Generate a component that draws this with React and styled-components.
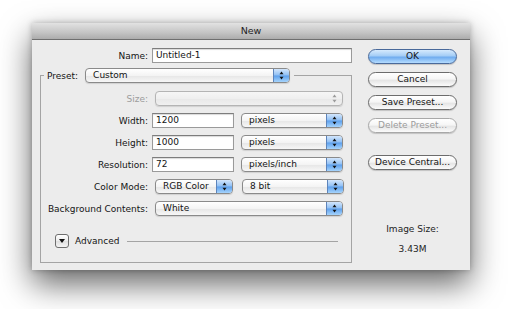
import React from "react";
import styled, { createGlobalStyle } from "styled-components";

const GlobalStyle = createGlobalStyle`
	html, body {
		margin: 0;
		padding: 0;
		background: #ffffff;
	}
	body {
		font-family: "DejaVu Sans", "Liberation Sans", sans-serif;
		font-size: 9px;
		color: #141414;
	}
`;

const Page = styled.div`
	width: 508px;
	height: 309px;
	overflow: hidden;
	background: #ffffff;
	padding: 23px 0 0 32px;
	box-sizing: border-box;
`;

const Window = styled.div`
	width: 438px;
	height: 247px;
	background: #ececec;
	display: flex;
	flex-direction: column;
	box-shadow: 0 14px 30px rgba(0, 0, 0, 0.6), 0 0 6px rgba(0, 0, 0, 0.25);
`;

const TitleBar = styled.div`
	height: 16px;
	line-height: 16px;
	text-align: center;
	font-size: 9.5px;
	color: #1e1e1e;
	background: linear-gradient(#e2e2e2, #c4c4c4 60%, #acacac);
	border-bottom: 1px solid #6f6f6f;
`;

const Body = styled.div`
	flex: 1;
	display: flex;
	justify-content: space-between;
`;

const LeftColumn = styled.div`
	padding: 8px 0 0 8px;
	display: flex;
	flex-direction: column;
`;

const NameRow = styled.div`
	display: flex;
	align-items: center;
	gap: 4px;
`;

const Label = styled.span`
	width: ${p => p.$width || 101}px;
	text-align: right;
	white-space: nowrap;
	color: ${p => (p.$disabled ? "#9c9c9c" : "#141414")};
`;

const TextInput = styled.div`
	width: ${p => p.$width}px;
	height: 15px;
	box-sizing: border-box;
	line-height: 13px;
	padding-left: 3px;
	background: #ffffff;
	border: 1px solid #9a9a9a;
	border-top-color: #7d7d7d;
	box-shadow: inset 0 1px 1px rgba(0, 0, 0, 0.15);
`;

const Group = styled.section`
	margin-top: 12px;
	padding: 0 0 13px 6px;
	width: 312px;
	height: 188px;
	box-sizing: border-box;
	border: 1px solid #a4a4a4;
	display: flex;
	flex-direction: column;
`;

const GroupHeader = styled.div`
	align-self: flex-start;
	display: flex;
	align-items: center;
	gap: 7px;
	margin: -8px 0 0 -3px;
	padding: 0 4px 0 3px;
	background: #ececec;
`;

const Rows = styled.div`
	margin-top: 8px;
	display: grid;
	grid-template-columns: 101px 1fr;
	column-gap: 4px;
	row-gap: 7px;
	align-items: center;
`;

const Controls = styled.div`
	display: flex;
	align-items: center;
	gap: 4px;
`;

const SelectBox = styled.div`
	width: ${p => p.$width}px;
	height: 15px;
	margin-left: ${p => p.$offset ?? 3}px;
	box-sizing: border-box;
	display: flex;
	border: 1px solid ${p => (p.$disabled ? "#b4b4b4" : "#8a8a8a")};
	border-radius: 4px;
	overflow: hidden;
	background: ${p =>
		p.$disabled
			? "linear-gradient(#f6f6f6, #efefef 50%, #e8e8e8 51%, #f0f0f0)"
			: "linear-gradient(#ffffff, #f4f4f4 50%, #e6e6e6 52%, #f7f7f7)"};
	box-shadow: 0 1px 1px rgba(0, 0, 0, 0.12);
`;

const SelectValue = styled.span`
	flex: 1;
	line-height: 13px;
	padding-left: 7px;
	white-space: nowrap;
`;

const Stepper = styled.span`
	width: 15px;
	display: flex;
	align-items: center;
	justify-content: center;
	background: ${p =>
		p.$disabled
			? "transparent"
			: "linear-gradient(#d3e6fc, #8fbff4 48%, #5c9fec 52%, #a6d4fc)"};
	border-left: 1px solid ${p => (p.$disabled ? "transparent" : "#5d84bb")};
`;

const Arrows = ({ color = "#111" }) => (
	<svg width="5" height="9" viewBox="0 0 5 9">
		<path d="M2.5 0.5 L4.5 3.3 L0.5 3.3 Z" fill={color} />
		<path d="M2.5 8.5 L4.5 5.7 L0.5 5.7 Z" fill={color} />
	</svg>
);

const Select = ({ value, width, disabled, offset }) => (
	<SelectBox $width={width} $disabled={disabled} $offset={offset}>
		<SelectValue>{value}</SelectValue>
		<Stepper $disabled={disabled}>
			<Arrows color={disabled ? "#9a9a9a" : "#111"} />
		</Stepper>
	</SelectBox>
);

const AdvancedRow = styled.div`
	margin-top: auto;
	display: flex;
	align-items: center;
	gap: 6px;
	padding: 0 13px 1px 8px;
`;

const DisclosureButton = styled.span`
	width: 14px;
	height: 14px;
	box-sizing: border-box;
	border: 1px solid #6e6e6e;
	border-radius: 3px;
	background: linear-gradient(#ffffff, #ececec 50%, #dedede 52%, #f4f4f4);
	display: flex;
	align-items: center;
	justify-content: center;
`;

const Rule = styled.span`
	flex: 1;
	height: 1px;
	background: #a4a4a4;
	margin-left: 2px;
`;

const RightColumn = styled.div`
	width: 89px;
	padding: 9px 13px 0 0;
	display: flex;
	flex-direction: column;
	align-items: center;
`;

const Button = styled.div`
	width: 89px;
	height: 15px;
	box-sizing: border-box;
	margin-bottom: ${p => p.$spaceAfter ?? 8}px;
	border-radius: 8px;
	text-align: center;
	line-height: 13px;
	white-space: nowrap;
	color: ${p => (p.$disabled ? "#9c9c9c" : "#141414")};
	border: 1px solid
		${p => (p.$primary ? "#49699a" : p.$disabled ? "#a8a8a8" : "#6c6c6c")};
	background: ${p =>
		p.$primary
			? "linear-gradient(#d6eafd, #a4cdf6 45%, #70acef 55%, #b4dcff)"
			: "linear-gradient(#ffffff, #f5f5f5 48%, #e4e4e4 54%, #fbfbfb)"};
	box-shadow: 0 1px 1px rgba(0, 0, 0, 0.18);
`;

const ImageSize = styled.div`
	margin-top: 41px;
	text-align: center;
	line-height: 20px;
	color: #1e1e1e;
`;

export default function App() {
	return (
		<>
			<GlobalStyle />
			<Page>
				<Window>
					<TitleBar>New</TitleBar>
					<Body>
						<LeftColumn>
							<NameRow>
								<Label $width={108}>Name:</Label>
								<TextInput $width={200}>Untitled-1</TextInput>
							</NameRow>
							<Group>
								<GroupHeader>
									<span>Preset:</span>
									<Select value="Custom" width={205} offset={0} />
								</GroupHeader>
								<Rows>
									<Label $disabled>Size:</Label>
									<Select value="" width={188} disabled />

									<Label>Width:</Label>
									<Controls>
										<TextInput $width={82}>1200</TextInput>
										<Select value="pixels" width={102} />
									</Controls>

									<Label>Height:</Label>
									<Controls>
										<TextInput $width={82}>1000</TextInput>
										<Select value="pixels" width={102} />
									</Controls>

									<Label>Resolution:</Label>
									<Controls>
										<TextInput $width={82}>72</TextInput>
										<Select value="pixels/inch" width={102} />
									</Controls>

									<Label>Color Mode:</Label>
									<Controls>
										<Select value="RGB Color" width={78} />
										<Select value="8 bit" width={102} offset={5} />
									</Controls>

									<Label>Background Contents:</Label>
									<Select value="White" width={188} />
								</Rows>
								<AdvancedRow>
									<DisclosureButton>
										<svg width="6" height="4" viewBox="0 0 6 4">
											<path d="M0 0 L6 0 L3 4 Z" fill="#111" />
										</svg>
									</DisclosureButton>
									<span>Advanced</span>
									<Rule />
								</AdvancedRow>
							</Group>
						</LeftColumn>
						<RightColumn>
							<Button $primary>OK</Button>
							<Button>Cancel</Button>
							<Button>Save Preset...</Button>
							<Button $disabled $spaceAfter={22}>Delete Preset...</Button>
							<Button>Device Central...</Button>
							<ImageSize>
								<div>Image Size:</div>
								<div>3.43M</div>
							</ImageSize>
						</RightColumn>
					</Body>
				</Window>
			</Page>
		</>
	);
}
